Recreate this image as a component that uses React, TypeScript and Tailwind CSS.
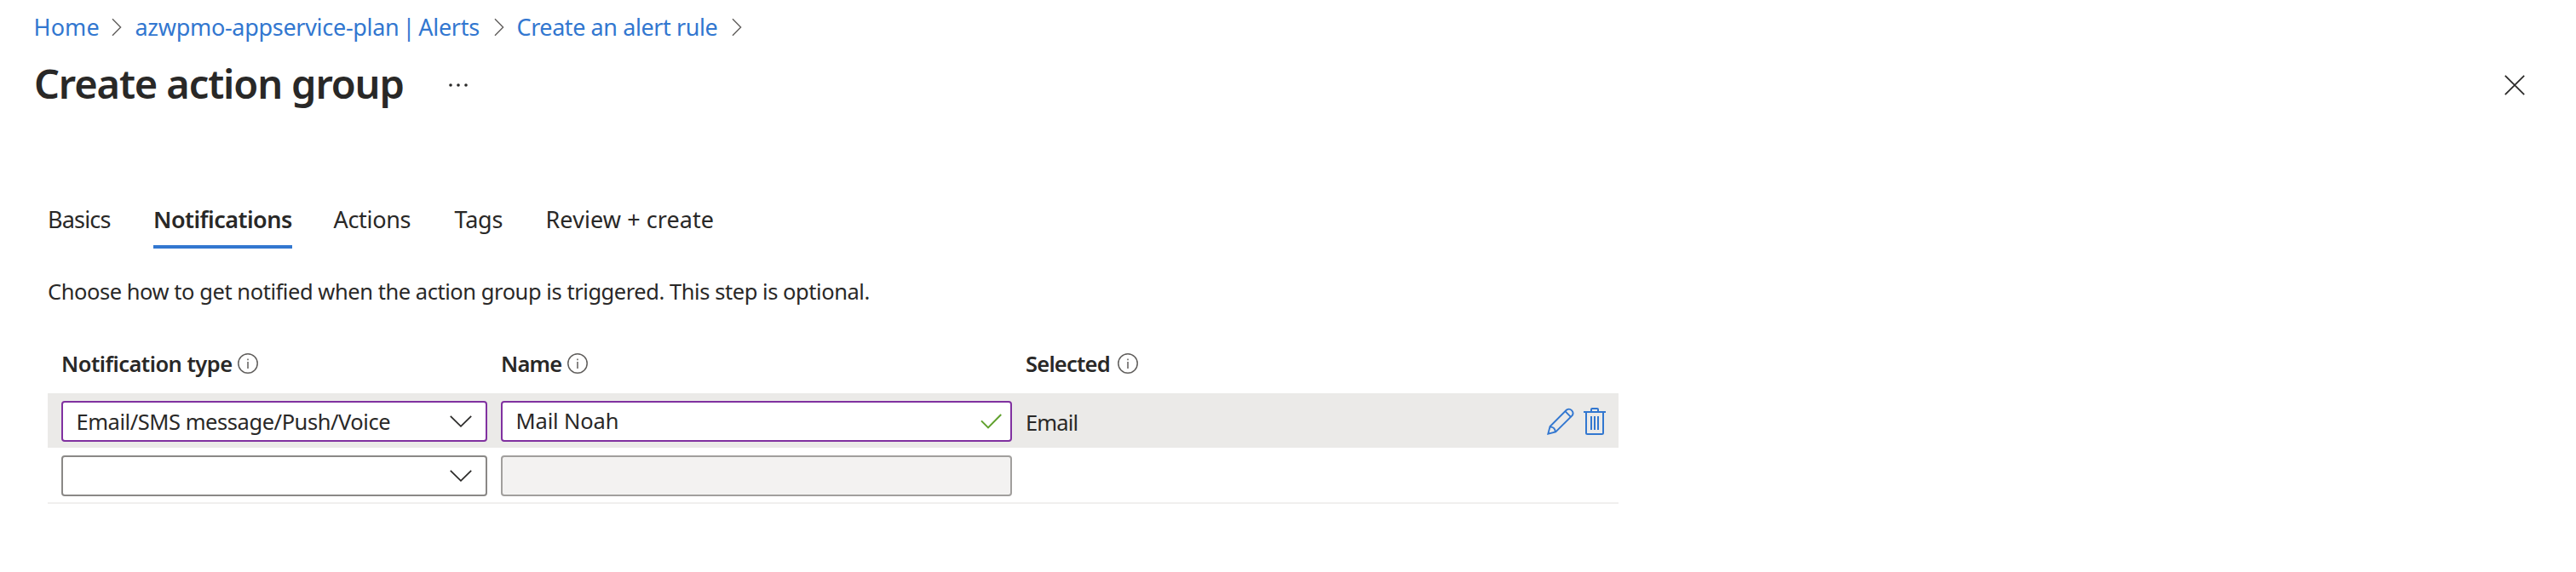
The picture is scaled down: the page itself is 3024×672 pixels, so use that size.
import type { ReactNode } from 'react';

function BreadcrumbChevron() {
  return (
    <svg className="block h-[22px] w-3 shrink-0" viewBox="0 0 12 22" fill="none" stroke="#605e5c" strokeWidth="1.4">
      <path d="M1 1.2L10.6 11L1 20.8" />
    </svg>
  );
}

function SelectChevron() {
  return (
    <svg className="block h-[14px] w-[26px] shrink-0" viewBox="0 0 26 14" fill="none" stroke="#292827" strokeWidth="1.7">
      <path d="M0.8 0.8L13 12.8L25.2 0.8" />
    </svg>
  );
}

function InfoIcon() {
  return (
    <svg className="block size-6 shrink-0" viewBox="0 0 24 24" fill="none" stroke="#605e5c" strokeWidth="1.5">
      <circle cx="12" cy="12" r="11.2" />
      <path d="M12 10V18" />
      <path d="M12 6.4V8.2" />
    </svg>
  );
}

function PencilIcon() {
  return (
    <svg className="block size-8" viewBox="0 0 32 32" fill="none" stroke="#3277d0" strokeWidth="1.9">
      <path d="M1.3 30.7L3.6 22L23 2.6A4.75 4.75 0 0 1 29.6 9.2L10.2 28.5Z" />
      <path d="M21.4 4.2L28 10.8" />
      <path d="M3.8 22.6C7.6 22.4 9.8 25 9.7 28.4" />
    </svg>
  );
}

function TrashIcon() {
  return (
    <svg className="block h-8 w-[26px]" viewBox="0 0 26 32" fill="none" stroke="#3277d0" strokeWidth="2">
      <path d="M0 5H26" />
      <path d="M9 5V2Q9 1 10 1H16Q17 1 17 2V5" />
      <path d="M3 5V29.5Q3 31 4.5 31H21.5Q23 31 23 29.5V5" />
      <path d="M9 10V26M13 10V26M17 10V26" />
    </svg>
  );
}

function Header({ children }: { children: ReactNode }) {
  return <div className="flex h-8 items-center font-semibold">{children}</div>;
}

const columns = 'grid grid-cols-[516px_616px_1fr] pl-4';

export default function App() {
  return (
    <div className="h-[672px] w-[3024px] overflow-hidden bg-white pt-4 font-['Noto_Sans','Open_Sans',sans-serif] text-[25.5px] leading-8 whitespace-nowrap text-[#292827]">
      <nav className="flex h-8 items-center pl-[39.5px] text-[27px] text-[#3277d0]">
        <a className="w-[91.5px] tracking-[0.14px]">Home</a>
        <BreadcrumbChevron />
        <a className="ml-[15.5px] w-[421px] tracking-[-0.3px] [word-spacing:-2.6px]">azwpmo-appservice-plan | Alerts</a>
        <BreadcrumbChevron />
        <a className="ml-[15px] w-[252px] tracking-[-0.42px]">Create an alert rule</a>
        <BreadcrumbChevron />
      </nav>

      <header className="mt-[18px] flex h-16 items-center pr-[60px] pl-10">
        <h1 className="w-[486px] text-[47px] leading-[64px] font-semibold tracking-[-1.13px]">Create action group</h1>
        <svg className="mt-1 block h-1 w-[24px]" viewBox="0 0 24 4" fill="#292827">
          <circle cx="3" cy="2" r="1.8" />
          <circle cx="12" cy="2" r="1.8" />
          <circle cx="21" cy="2" r="1.8" />
        </svg>
        <svg className="mt-1 ml-auto block size-6" viewBox="0 0 24 24" fill="none" stroke="#292827" strokeWidth="1.7">
          <path d="M0.8 0.8L23.2 23.2M23.2 0.8L0.8 23.2" />
        </svg>
      </header>

      <div className="mt-[108px] flex h-[54px] pl-14 text-[27px] leading-10">
        <div className="w-[124px] tracking-[-0.81px]">Basics</div>
        <div className="w-[163px] border-b-4 border-[#3277d0] font-semibold tracking-[-0.52px]">Notifications</div>
        <div className="ml-[48.5px] w-[142px] tracking-[-0.32px]">Actions</div>
        <div className="w-[107px] tracking-[-0.2px]">Tags</div>
        <div className="tracking-[0.08px]">Review + create</div>
      </div>

      <p className="mt-[34px] pl-14 tracking-[-0.45px]">
        Choose how to get notified when the action group is triggered. This step is optional.
      </p>

      <section className="mt-[53px] ml-14 w-[1844px]">
        <div className={columns}>
          <Header>
            <span className="w-[207px] tracking-[-0.51px]">Notification type</span>
            <InfoIcon />
          </Header>
          <Header>
            <span className="w-[78px] tracking-[-0.8px]">Name</span>
            <InfoIcon />
          </Header>
          <Header>
            <span className="w-[108px] tracking-[-0.77px]">Selected</span>
            <InfoIcon />
          </Header>
        </div>

        <div className={`${columns} mt-[19px] h-16 bg-[#ebeae8] pt-[9px]`}>
          <div className="flex h-12 w-[500px] items-center justify-between rounded border-2 border-[#8031a0] bg-white pr-4 pl-[15.5px]">
            <span className="tracking-[-0.45px]">Email/SMS message/Push/Voice</span>
            <SelectChevron />
          </div>
          <div className="flex h-12 w-[600px] items-center justify-between rounded border-2 border-[#8031a0] bg-white pr-[10px] pl-[15.5px]">
            <span className="pb-[2px] tracking-[-0.14px]">Mail Noah</span>
            <svg className="block h-[18px] w-[25px]" viewBox="0 0 25 18" fill="none" stroke="#5fa02c" strokeWidth="2">
              <path d="M1 8.4L9 16.4L24.2 1" />
            </svg>
          </div>
          <div className="flex h-12 items-center pr-[15px]">
            <span className="pt-[2px] tracking-[-0.85px]">Email</span>
            <div className="ml-auto flex gap-[11px]">
              <PencilIcon />
              <TrashIcon />
            </div>
          </div>
        </div>

        <div className={`${columns} h-[66px] border-b-2 border-[#f0efee] pt-[9px]`}>
          <div className="flex h-12 w-[500px] items-center justify-end rounded border-2 border-[#8a8886] bg-white pr-4">
            <SelectChevron />
          </div>
          <div className="h-12 w-[600px] rounded border-2 border-[#a19f9d] bg-[#f3f2f1]" />
        </div>
      </section>
    </div>
  );
}
